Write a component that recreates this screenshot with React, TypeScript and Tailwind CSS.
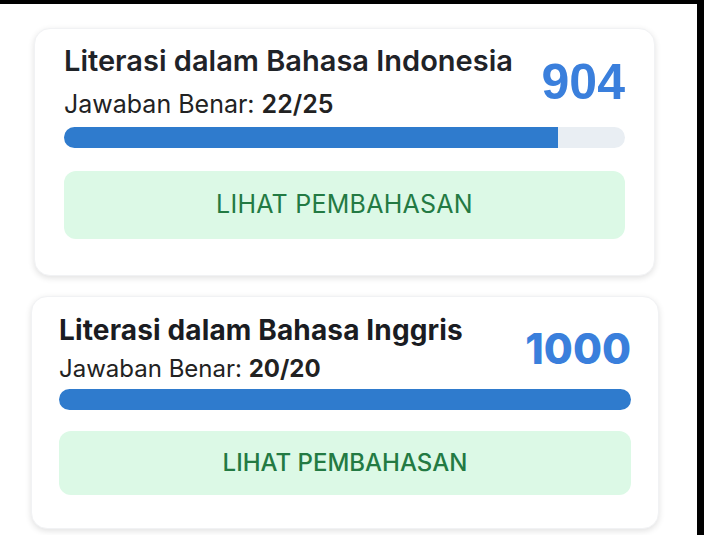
import React from "react"

// Kartu hasil per subtes
interface ScoreCardProps {
  title: string;
  correct: number;
  total: number;
  score: number;
  big?: boolean;
}

const ScoreCard = ({ title, correct, total, score, big }: ScoreCardProps) => {
  const pct = (correct / total) * 100

  if (big) {
    return (
      <div className="ml-[34px] w-[621px] bg-white rounded-2xl shadow-[0_2px_6px_rgba(0,0,0,0.12)] border border-[#f1f2f4] pt-[10px] pb-[36px] px-[29px]">
        <div className="flex items-center justify-between">
          <div>
            <h3 className="text-[29px] leading-[44px] font-semibold text-[#1f2328]">{title}</h3>
            <p className="text-[25px] leading-[42px] text-[#222]">
              Jawaban Benar: <span className="font-semibold">{correct}/{total}</span>
            </p>
          </div>
          <div className="text-[50px] leading-none font-bold text-[#3a7fdc] font-['Liberation_Sans',sans-serif]">{score}</div>
        </div>
        <div className="mt-[2px] h-[21px] w-full rounded-full bg-[#e9eef3] overflow-hidden">
          <div className="h-full bg-[#2f7bcd]" style={{ width: `${pct}%` }} />
        </div>
        <button className="mt-[23px] w-full h-[68px] rounded-xl bg-[#dcf9e6] text-[#237a43] text-[25px] tracking-[0.01em]">
          LIHAT PEMBAHASAN
        </button>
      </div>
    )
  }

  return (
    <div className="ml-[31px] w-[628px] bg-white rounded-2xl shadow-[0_2px_6px_rgba(0,0,0,0.12)] border border-[#f1f2f4] pt-[13px] pb-[33px] px-[27px]">
      <div className="flex items-center justify-between">
        <div>
          <h3 className="text-[28px] leading-[40px] font-bold text-[#1a1c22] tracking-[0.005em]">{title}</h3>
          <p className="text-[24px] leading-[38px] text-[#222]">
            Jawaban Benar: <span className="font-bold">{correct}/{total}</span>
          </p>
        </div>
        <div className="text-[42px] leading-none font-extrabold text-[#3a7fdc]">{score}</div>
      </div>
      <div className="mt-[1px] h-[21px] w-full rounded-full bg-[#e9eef3] overflow-hidden">
        <div className="h-full bg-[#2f7bcd]" style={{ width: `${pct}%` }} />
      </div>
      <button className="mt-[21px] w-full h-[64px] rounded-xl bg-[#dcf9e6] text-[#237a43] text-[24px] font-medium">
        LIHAT PEMBAHASAN
      </button>
    </div>
  )
}

export default function App() {
  return (
    <div className="w-[704px] h-[535px] bg-black pt-[4px] pr-[7px] overflow-hidden font-['Inter',sans-serif]">
      <div className="h-full bg-white pt-[24px] flex flex-col gap-[20px]">
        <ScoreCard title="Literasi dalam Bahasa Indonesia" correct={22} total={25} score={904} big />
        <ScoreCard title="Literasi dalam Bahasa Inggris" correct={20} total={20} score={1000} />
      </div>
    </div>
  )
}
